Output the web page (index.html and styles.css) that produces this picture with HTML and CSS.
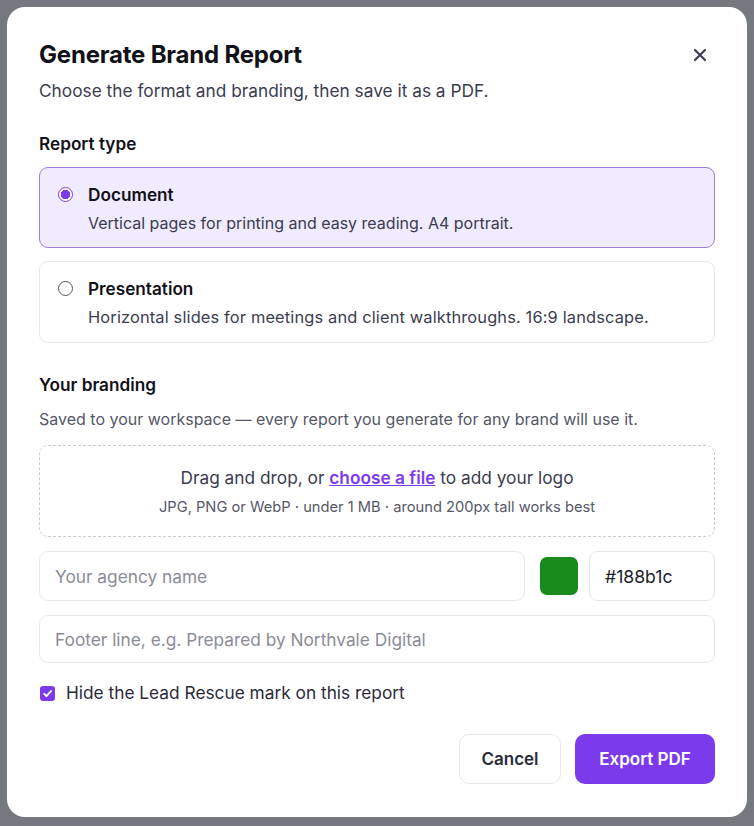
FILE: index.html
```html
<!DOCTYPE html>
<html lang="en">
<head>
<meta charset="utf-8">
<title>Generate Brand Report</title>
<link rel="stylesheet" href="styles.css">
</head>
<body>
<div class="backdrop">
  <div class="modal">
    <div class="header">
      <h1 class="title">Generate Brand Report</h1>
      <button class="close" aria-label="Close">
        <svg width="14" height="14" viewBox="0 0 14 14"><path d="M2 2L12 12M12 2L2 12" stroke="#3b3c4f" stroke-width="2.2" stroke-linecap="round"/></svg>
      </button>
    </div>
    <p class="subtitle">Choose the format and branding, then save it as a PDF.</p>

    <div class="section-label first">Report type</div>
    <div class="options">
      <label class="option selected">
        <span class="radio on"></span>
        <span class="opt-text">
          <span class="opt-title">Document</span>
          <span class="opt-desc">Vertical pages for printing and easy reading. A4 portrait.</span>
        </span>
      </label>
      <label class="option second">
        <span class="radio"></span>
        <span class="opt-text">
          <span class="opt-title">Presentation</span>
          <span class="opt-desc wide">Horizontal slides for meetings and client walkthroughs. 16:9 landscape.</span>
        </span>
      </label>
    </div>

    <div class="section-label branding">Your branding</div>
    <p class="section-desc">Saved to your workspace — every report you generate for any brand will use it.</p>

    <div class="dropzone">
      <div class="dz-main">Drag and drop, or <a class="dz-link">choose a file</a> to add your logo</div>
      <div class="dz-sub">JPG, PNG or WebP · under 1 MB · around 200px tall works best</div>
    </div>

    <div class="row">
      <div class="field agency placeholder">Your agency name</div>
      <span class="swatch"></span>
      <div class="field hex">#188b1c</div>
    </div>
    <div class="field footer placeholder">Footer line, e.g. Prepared by Northvale Digital</div>

    <label class="check-row">
      <span class="checkbox">
        <svg width="11" height="11" viewBox="0 0 12 12"><path d="M2.3 6.3L4.9 8.8L9.8 3.3" fill="none" stroke="#fff" stroke-width="2" stroke-linecap="round" stroke-linejoin="round"/></svg>
      </span>
      <span class="check-label">Hide the Lead Rescue mark on this report</span>
    </label>

    <div class="actions">
      <button class="btn cancel">Cancel</button>
      <button class="btn primary">Export PDF</button>
    </div>
  </div>
</div>
</body>
</html>
```
FILE: styles.css
```css
* { box-sizing: border-box; }
html, body { margin: 0; padding: 0; }
body {
  background: #75787f;
  font-family: Inter, "Noto Sans", "Liberation Sans", sans-serif;
  width: 754px;
  height: 826px;
  overflow: hidden;
}
.backdrop { padding: 7px 7px 0 7px; }
.modal {
  width: 740px;
  height: 810px;
  background: #ffffff;
  border-radius: 18px;
  padding: 33px 32px 33px 32px;
  display: flex;
  flex-direction: column;
}
.header {
  display: flex;
  justify-content: space-between;
  align-items: center;
  height: 30px;
}
.title {
  margin: 0;
  font-size: 24px;
  line-height: 30px;
  font-weight: 700;
  color: #111118;
  letter-spacing: -0.2px;
}
.close {
  border: 0;
  background: transparent;
  padding: 0;
  width: 14px;
  height: 14px;
  margin-right: 8px;
  display: flex;
}
.subtitle {
  margin: 9px 0 0 0;
  font-size: 17.3px;
  line-height: 24px;
  color: #3b3c4f;
}
.section-label {
  margin-top: 29px;
  font-size: 17.2px;
  line-height: 24px;
  font-weight: 600;
  color: #111118;
}
.section-label.branding { margin-top: 30px; }
.options {
  margin-top: 11px;
  display: flex;
  flex-direction: column;
  gap: 13px;
}
.option {
  display: flex;
  align-items: flex-start;
  gap: 15px;
  border: 1px solid #e7e8ee;
  border-radius: 9px;
  padding: 16px 18px 12px 18px;
  background: #ffffff;
}
.option.second { padding-bottom: 13px; }
.option.selected {
  background: #f0ebfe;
  border-color: #9b7fd8;
}
.radio {
  flex: none;
  width: 15px;
  height: 15px;
  border-radius: 50%;
  border: 1px solid #55575f;
  margin-top: 3px;
  background: #fff;
}
.radio.on {
  border: 1.5px solid #7c3aed;
  background: radial-gradient(circle, #7c3aed 0 4.5px, #fff 5px);
}
.opt-text { display: flex; flex-direction: column; gap: 5px; }
.opt-title {
  font-size: 17.2px;
  line-height: 22px;
  font-weight: 600;
  color: #111118;
}
.opt-desc {
  font-size: 16px;
  line-height: 24px;
  color: #3b3c4f;
}
.opt-desc.wide { font-size: 16.4px; letter-spacing: 0.15px; }
.section-desc {
  margin: 11px 0 0 0;
  font-size: 16px;
  line-height: 22px;
  color: #555866;
}
.dropzone {
  margin-top: 15px;
  height: 94px;
  border: 1px dashed #c9cbd3;
  border-radius: 9px;
  padding-top: 20px;
  text-align: center;
}
.dz-main {
  font-size: 17.3px;
  line-height: 24px;
  color: #3b3c4f;
}
.dz-link {
  color: #7c3aed;
  text-decoration: underline;
  font-weight: 600;
}
.dz-sub {
  margin-top: 7px;
  font-size: 14.7px;
  line-height: 20px;
  color: #555866;
}
.row {
  margin-top: 14px;
  display: flex;
  align-items: center;
}
.field {
  height: 50px;
  border: 1px solid #e7e8ee;
  border-radius: 9px;
  padding: 0 15px;
  display: flex;
  align-items: center;
  font-size: 17.3px;
  color: #1d1e2a;
  background: #fff;
}
.placeholder { color: #8a8c97; }
.agency { width: 486px; }
.swatch {
  width: 38px;
  height: 38px;
  border-radius: 7px;
  background: #188b1c;
  margin-left: 15px;
}
.hex { width: 126px; margin-left: 11px; font-size: 17.6px; }
.footer { margin-top: 14px; height: 49px; }
.check-row {
  margin-top: 18px;
  display: flex;
  align-items: center;
  gap: 11px;
  margin-left: 1px;
}
.checkbox {
  width: 15px;
  height: 15px;
  border-radius: 3px;
  background: #7c3aed;
  display: flex;
  align-items: center;
  justify-content: center;
}
.check-label {
  font-size: 17.3px;
  line-height: 24px;
  color: #2a2b3a;
}
.actions {
  margin-top: 29px;
  display: flex;
  justify-content: flex-end;
  gap: 14px;
}
.btn {
  height: 50px;
  border-radius: 10px;
  font-family: Inter, "Noto Sans", "Liberation Sans", sans-serif;
  font-size: 17px;
  font-weight: 600;
  cursor: pointer;
}
.cancel {
  width: 102px;
  background: #fff;
  border: 1px solid #e7e8ee;
  color: #2a2b3a;
}
.primary {
  width: 140px;
  background: #7c3aed;
  border: 0;
  color: #fff;
}
```
